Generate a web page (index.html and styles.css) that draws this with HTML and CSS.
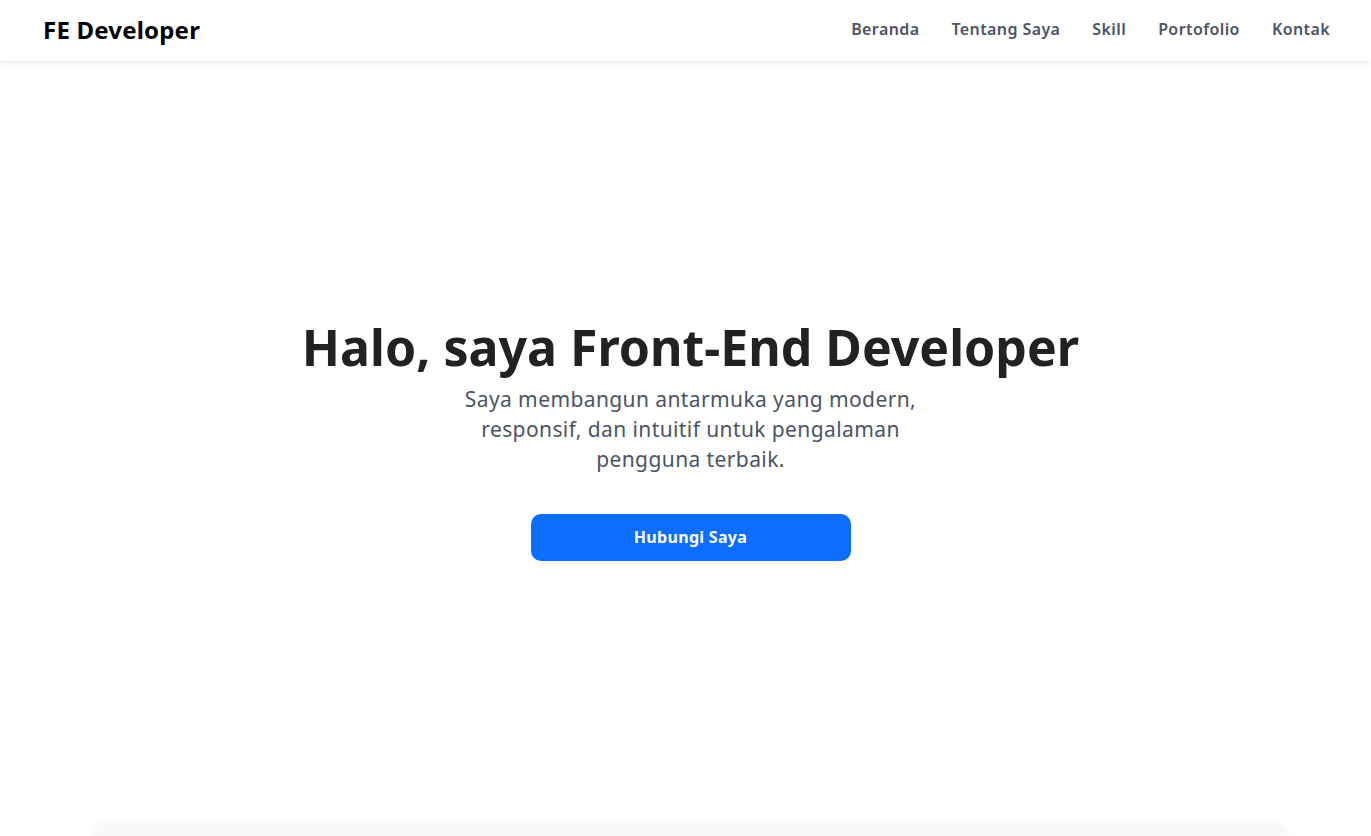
FILE: index.html
```html
<!DOCTYPE html>
<html lang="id">
<head>
<meta charset="utf-8">
<title>FE Developer</title>
<link rel="stylesheet" href="styles.css">
</head>
<body>
<header class="site-header">
  <a class="logo" href="#">FE Developer</a>
  <nav class="nav">
    <a href="#beranda">Beranda</a>
    <a href="#tentang">Tentang Saya</a>
    <a href="#skill">Skill</a>
    <a href="#portofolio">Portofolio</a>
    <a href="#kontak">Kontak</a>
  </nav>
</header>
<main>
  <section class="hero" id="beranda">
    <h1 class="hero-title">Halo, saya Front-End Developer</h1>
    <p class="hero-text">Saya membangun antarmuka yang modern, responsif, dan intuitif untuk pengalaman pengguna terbaik.</p>
    <a class="btn" href="#kontak">Hubungi Saya</a>
  </section>
  <section class="about" id="tentang">
    <div class="card"></div>
  </section>
</main>
</body>
</html>
```

FILE: styles.css
```css
* { box-sizing: border-box; }
html, body { margin: 0; padding: 0; }
body {
  font-family: "Noto Sans", "Open Sans", sans-serif;
  background: #fff;
  color: #222;
}
a { text-decoration: none; }
.site-header {
  height: 61px;
  background: #fff;
  display: flex;
  align-items: center;
  justify-content: space-between;
  padding: 0 41px 0 43px;
  box-shadow: 0 2px 6px rgba(0,0,0,0.08);
  position: relative;
  z-index: 2;
}
.logo {
  font-weight: 700;
  font-size: 24px;
  letter-spacing: 0.2px;
  color: #000;
  margin-top: -3px;
}
.nav {
  display: flex;
  gap: 32px;
  margin-top: -3px;
}
.nav a {
  font-size: 16px;
  font-weight: 600;
  letter-spacing: 0.4px;
  color: #4b5563;
}
.hero {
  height: 761px;
  display: flex;
  flex-direction: column;
  align-items: center;
  justify-content: center;
  text-align: center;
  padding-left: 10px;
}
.hero-title {
  margin: 0 0 12px;
  font-size: 50px;
  font-weight: 700;
  color: #222;
  line-height: 50px;
}
.hero-text {
  margin: 0;
  max-width: 480px;
  font-size: 21px;
  letter-spacing: 0.4px;
  line-height: 30px;
  color: #4b5563;
}
.btn {
  margin-top: 40px;
  width: 320px;
  height: 47px;
  border-radius: 10px;
  background: #0d6efd;
  color: #fff;
  font-weight: 700;
  font-size: 16px;
  letter-spacing: 0.3px;
  display: flex;
  align-items: center;
  justify-content: center;
  padding-bottom: 2px;
}
.about {
  padding: 0 83px 0 91px;
}
.card {
  height: 200px;
  background: #f8f9fa;
  border-radius: 16px;
  box-shadow: 0 0 14px rgba(0,0,0,0.03);
}
```
